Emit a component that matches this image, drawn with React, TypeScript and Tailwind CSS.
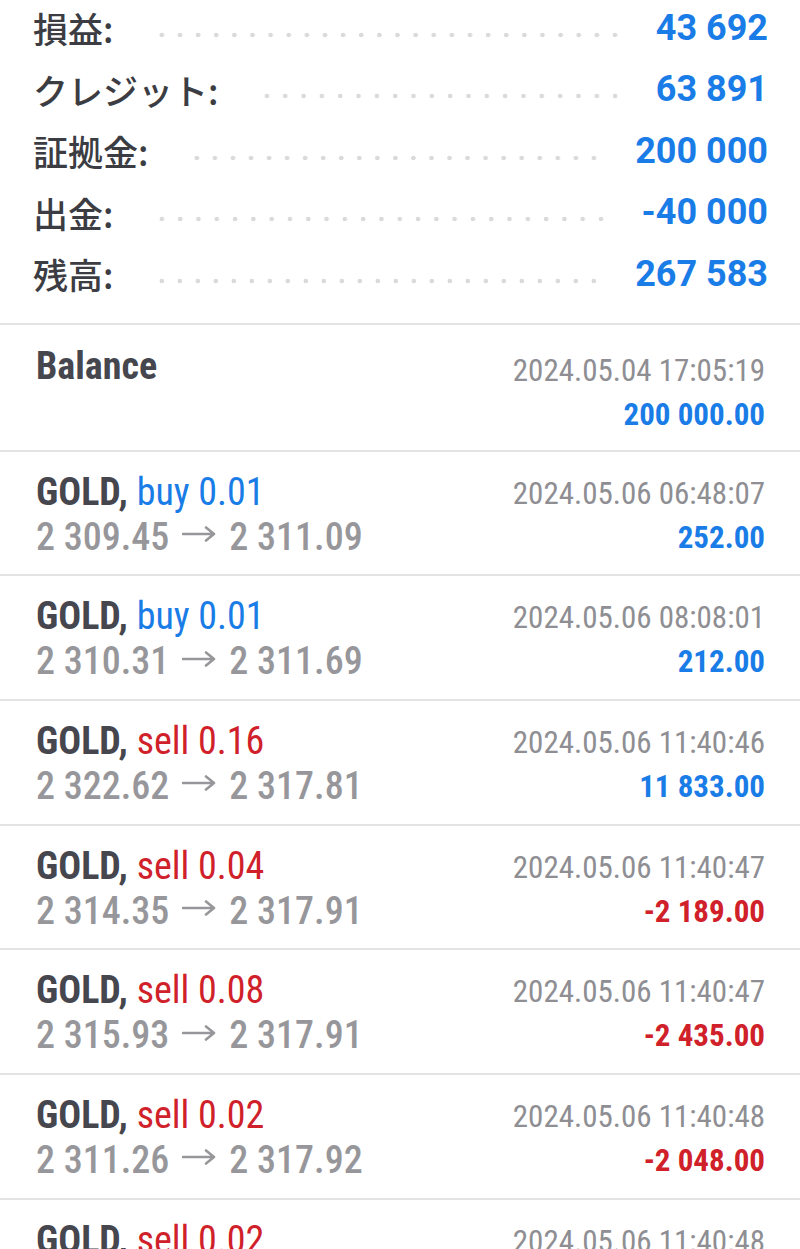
const summary = [
  { label: "損益", value: "43 692" },
  { label: "クレジット", value: "63 891" },
  { label: "証拠金", value: "200 000" },
  { label: "出金", value: "-40 000" },
  { label: "残高", value: "267 583" },
];

type Deal = {
  symbol: string;
  side: "buy" | "sell";
  lots: string;
  open: string;
  close: string;
  time: string;
  profit: string;
};

const deals: Deal[] = [
  { symbol: "GOLD", side: "buy", lots: "0.01", open: "2 309.45", close: "2 311.09", time: "2024.05.06 06:48:07", profit: "252.00" },
  { symbol: "GOLD", side: "buy", lots: "0.01", open: "2 310.31", close: "2 311.69", time: "2024.05.06 08:08:01", profit: "212.00" },
  { symbol: "GOLD", side: "sell", lots: "0.16", open: "2 322.62", close: "2 317.81", time: "2024.05.06 11:40:46", profit: "11 833.00" },
  { symbol: "GOLD", side: "sell", lots: "0.04", open: "2 314.35", close: "2 317.91", time: "2024.05.06 11:40:47", profit: "-2 189.00" },
  { symbol: "GOLD", side: "sell", lots: "0.08", open: "2 315.93", close: "2 317.91", time: "2024.05.06 11:40:47", profit: "-2 435.00" },
  { symbol: "GOLD", side: "sell", lots: "0.02", open: "2 311.26", close: "2 317.92", time: "2024.05.06 11:40:48", profit: "-2 048.00" },
  { symbol: "GOLD", side: "sell", lots: "0.02", open: "2 311.26", close: "2 317.92", time: "2024.05.06 11:40:48", profit: "-2 048.00" },
];

// long thin arrow between open and close price
const Arrow = () => (
  <svg width="34" height="18" viewBox="0 0 34 18" className="mx-[13px] mb-[6px] inline-block" fill="none">
    <path d="M1 9h31M24 2.5l8 6.5-8 6.5" stroke="#97979b" strokeWidth="2.6" strokeLinecap="round" strokeLinejoin="round" />
  </svg>
);

const SummaryRow = ({ label, value }: { label: string; value: string }) => (
  <div className="flex h-[61.5px] items-center">
    <span className="font-['Noto_Sans_CJK_JP',sans-serif] text-[35px] font-medium leading-none text-[#3c3c43]">
      {label}:
    </span>
    <div className="ml-[40px] mr-[32px] mt-[14px] h-[6px] flex-1 bg-[radial-gradient(circle,#dadada_2px,transparent_2.6px)] bg-[length:17.7px_6px] bg-repeat-space" />
    <span className="font-['Roboto',sans-serif] text-[36px] font-bold leading-none text-[#1a7ce6]">
      {value}
    </span>
  </div>
);

const DealRow = ({ deal }: { deal: Deal }) => {
  const profitColor = deal.profit.startsWith("-") ? "text-[#d0212a]" : "text-[#1a7ce6]";
  return (
    <div className="flex h-[124.7px] justify-between border-t-2 border-[#e3e3e3] pl-[36px] pr-[35px] pt-[18px] font-['Roboto_Condensed',Roboto,sans-serif]">
      <div className="flex flex-col">
        <div className="text-[38px] leading-[45px]">
          <span className="font-bold text-[#46464e]">{deal.symbol}, </span>
          <span className={deal.side === "buy" ? "text-[#1a7ce6]" : "text-[#d0212a]"}>
            {deal.side} {deal.lots}
          </span>
        </div>
        <div className="flex items-center text-[38px] font-medium leading-[45px] text-[#97979b]">
          <span>{deal.open}</span>
          <Arrow />
          <span>{deal.close}</span>
        </div>
      </div>
      <div className="flex flex-col items-end pt-[2px]">
        <div className="text-[31px] leading-[44px] text-[#8e8e93]">{deal.time}</div>
        <div className={`text-[31px] font-bold leading-[44px] ${profitColor}`}>{deal.profit}</div>
      </div>
    </div>
  );
};

const App = () => {
  return (
    <div className="h-[1249px] w-[800px] overflow-hidden bg-white">
      <div className="-mt-[3px] pb-[18px] pl-[33px] pr-[32px]">
        {summary.map((s) => (
          <SummaryRow key={s.label} label={s.label} value={s.value} />
        ))}
      </div>

      <div className="flex h-[127px] justify-between border-t-2 border-[#e3e3e3] pl-[36px] pr-[35px] pt-[19px] font-['Roboto_Condensed',Roboto,sans-serif]">
        <div className="text-[38px] font-bold leading-[45px] text-[#46464e]">Balance</div>
        <div className="flex flex-col items-end pt-[5px]">
          <div className="text-[31px] leading-[44px] text-[#8e8e93]">2024.05.04 17:05:19</div>
          <div className="text-[31px] font-bold leading-[44px] text-[#1a7ce6]">200 000.00</div>
        </div>
      </div>

      {deals.map((d, i) => (
        <DealRow key={i} deal={d} />
      ))}
    </div>
  );
};

export default App;
